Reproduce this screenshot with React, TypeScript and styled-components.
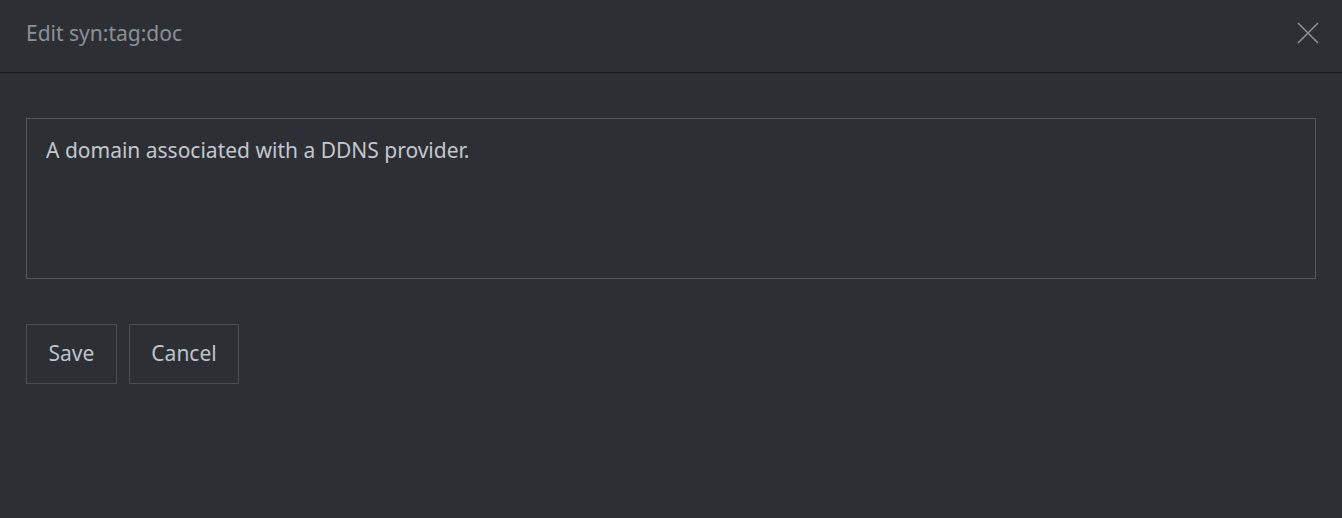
import styled, { createGlobalStyle } from "styled-components"

const Global = createGlobalStyle`
body{
  margin:0;
  background:#2c3035;
  font-family:"Noto Sans","Open Sans",sans-serif;
}
`

const Dialog = styled.div`
width:1342px;
height:518px;
background:#2c3035;
display:flex;
flex-direction:column;
`
const Header = styled.div`
height:73px;
box-sizing:border-box;
border-bottom:1px solid #181b1f;
display:flex;
align-items:center;
justify-content:space-between;
padding:0 22px 6px 26px;
`
const Title = styled.div`
font-size:21px;
color:#8b9097;
`
const Close = styled.button`
background:none;
border:none;
padding:0;
width:24px;
height:24px;
cursor:pointer;
display:flex;
`
const Body = styled.div`
padding:45px 26px 0 26px;
display:flex;
flex-direction:column;
gap:45px;
`
const Area = styled.textarea`
height:161px;
box-sizing:border-box;
background:transparent;
border:1px solid #55595e;
color:#c3c7cd;
font-family:inherit;
font-size:21px;
line-height:29px;
padding:17px 19px;
resize:none;
outline:none;
`
const Actions = styled.div`
display:flex;
gap:12px;
`
const Btn = styled.button`
height:60px;
padding:0 21.5px 3px;
background:transparent;
border:1px solid #4a4e54;
color:#bfc3c9;
font-family:inherit;
font-size:21px;
cursor:pointer;
`

const App = () => {
  return (
    <Dialog>
      <Global />
      <Header>
        <Title>Edit syn:tag:doc</Title>
        <Close aria-label="close">
          <svg width="24" height="24" viewBox="0 0 24 24">
            <path d="M2 2L22 22M22 2L2 22" stroke="#8b9097" strokeWidth="1.6" />
          </svg>
        </Close>
      </Header>
      <Body>
        <Area defaultValue="A domain associated with a DDNS provider." />
        <Actions>
          <Btn>Save</Btn>
          <Btn>Cancel</Btn>
        </Actions>
      </Body>
    </Dialog>
  )
}

export default App
